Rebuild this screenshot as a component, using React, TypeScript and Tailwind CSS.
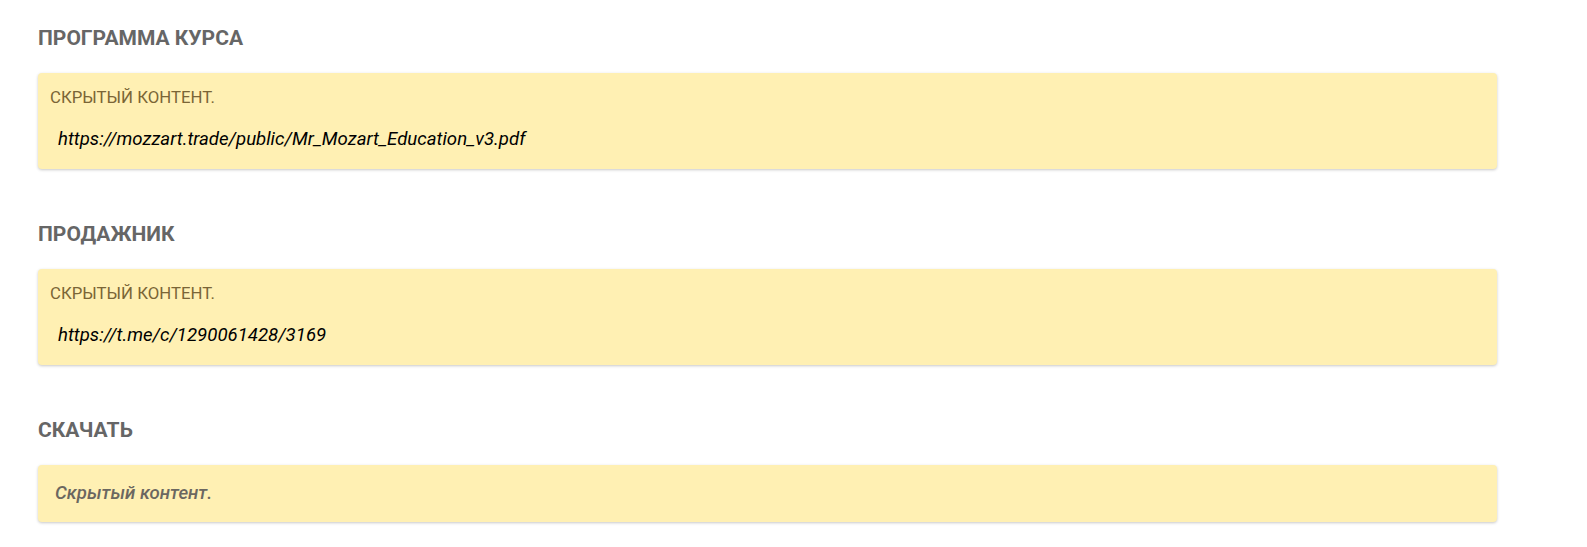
const font = { fontFamily: "Roboto, 'Noto Sans', sans-serif" };

type Block = { title: string; link?: string };

const blocks: Block[] = [
  { title: "ПРОГРАММА КУРСА", link: "https://mozzart.trade/public/Mr_Mozart_Education_v3.pdf" },
  { title: "ПРОДАЖНИК", link: "https://t.me/c/1290061428/3169" },
  { title: "СКАЧАТЬ" },
];

function Hidden({ link }: { link?: string }) {
  if (!link) {
    return (
      <div className="w-[1459px] rounded bg-[#fff0b3] px-[17px] py-[16px] shadow-[0_1px_3px_rgba(0,0,0,0.22)]">
        <div className="text-[18.6px] font-medium italic leading-[25px] text-[#6b6760]">Скрытый контент.</div>
      </div>
    );
  }
  return (
    <div className="w-[1459px] rounded bg-[#fff0b3] pt-[14px] pb-[18px] pl-[12px] shadow-[0_1px_3px_rgba(0,0,0,0.22)]">
      <div className="text-[16.8px] uppercase leading-[20px] text-[#7a6536]">Скрытый контент.</div>
      <div className="mt-[20px] pl-[8px] text-[18.6px] italic leading-[24px] text-black">{link}</div>
    </div>
  );
}

export default function App() {
  return (
    <div style={font} className="min-h-screen bg-white pl-[38px] pt-[24px]">
      {blocks.map((b, i) => (
        <div key={b.title} className={i > 0 ? "mt-[51px]" : ""}>
          <h2 className="mb-[21px] text-[21px] font-bold leading-[28px] text-[#666666]">{b.title}</h2>
          <Hidden link={b.link} />
        </div>
      ))}
    </div>
  );
}
